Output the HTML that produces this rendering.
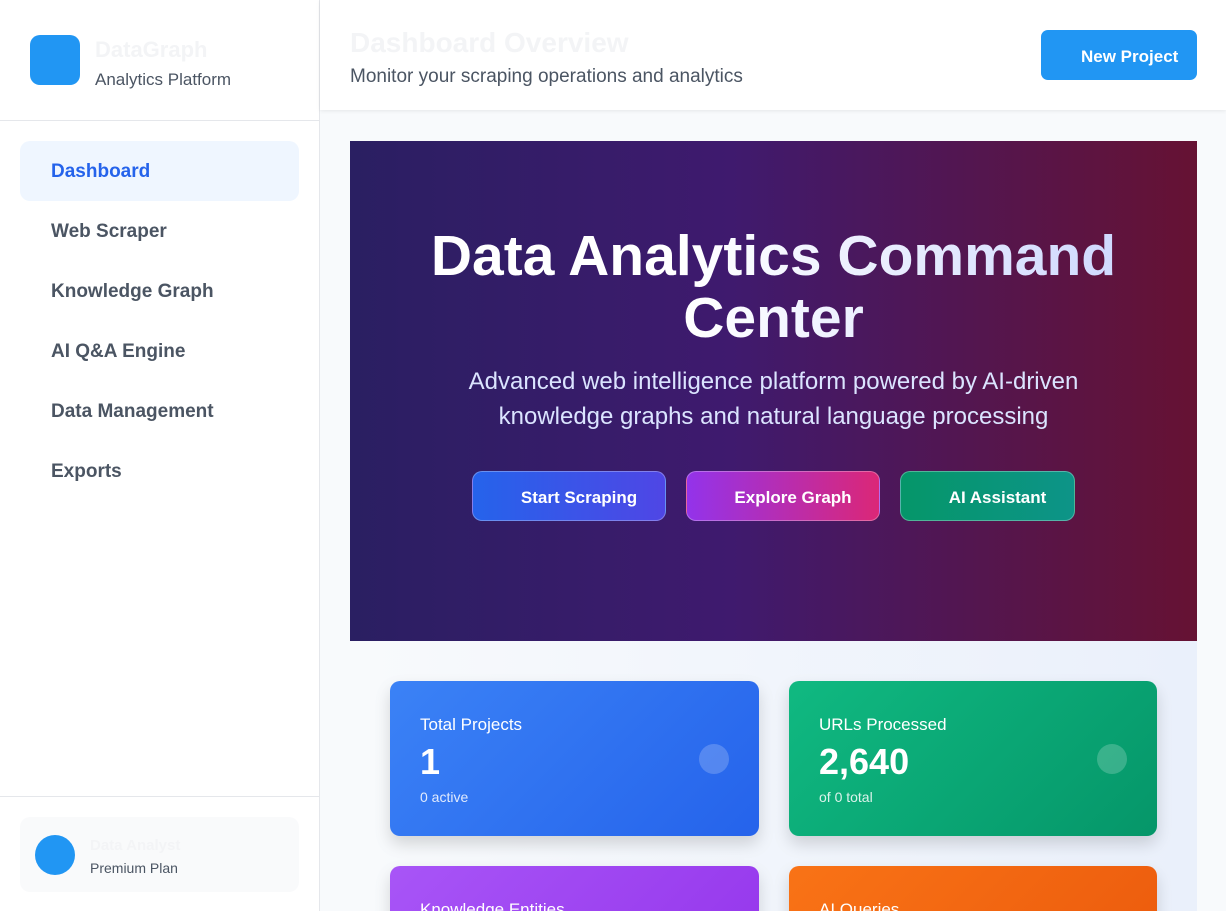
<!DOCTYPE html>
<html style="width:1226px;height:911px;overflow:hidden"><head><style>
*{box-sizing:border-box;margin:0;padding:0}
body{width:1226px;height:911px;overflow:hidden;font-family:"Liberation Sans",sans-serif;background:#f8fafc;position:relative}
.side{position:absolute;left:0;top:0;width:320px;height:911px;background:#fff;border-right:1px solid #e5e7eb}
.logo{position:absolute;left:30px;top:35px;width:50px;height:50px;border-radius:10px;background:#2196f3}
.bt{position:absolute;left:95px;top:37px;font-size:22px;font-weight:bold;color:#f3f4f6}
.bs{position:absolute;left:95px;top:70px;font-size:17px;color:#4b5563}
.hr1{position:absolute;left:0;top:120px;width:320px;border-top:1px solid #e5e7eb}
.nav{position:absolute;left:20px;width:279px;height:60px;border-radius:10px;padding-left:31px;line-height:62px;font-size:19px;font-weight:bold;color:#4b5563}
.nav.a{background:#eff6ff;color:#2563eb}
.hr2{position:absolute;left:0;top:796px;width:320px;border-top:1px solid #e5e7eb}
.user{position:absolute;left:20px;top:817px;width:279px;height:75px;border-radius:10px;background:#f9fafb}
.av{position:absolute;left:15px;top:18px;width:40px;height:40px;border-radius:50%;background:#2196f3}
.header{position:absolute;left:320px;top:0;width:906px;height:110px;background:#fff;box-shadow:0 1px 4px rgba(0,0,0,.08)}
.ht{position:absolute;left:30px;top:27px;font-size:28px;font-weight:bold;color:#f3f4f6}
.hs{position:absolute;left:30px;top:66px;font-size:19px;color:#4b5563}
.btn{position:absolute;left:721px;top:30px;width:156px;height:50px;border-radius:7px;background:#2196f3;color:#fff;font-weight:bold;font-size:17px;line-height:54px;padding-left:40px}
.hero{position:absolute;left:350px;top:141px;width:847px;height:500px;background:linear-gradient(90deg,#2a1f62,#3f1a6e 45%,#661233);text-align:center;color:#fff}
.hero h1{position:absolute;top:84px;left:0;width:100%;font-size:57px;line-height:62px;font-weight:bold;background:linear-gradient(90deg,#fff,#fff 40%,#c7d2fe);-webkit-background-clip:text;color:transparent}
.hero p{position:absolute;top:223px;left:0;width:100%;font-size:24px;line-height:35px;color:#dbe4ff}
.hb{position:absolute;top:330px;height:50px;border-radius:10px;font-size:17px;font-weight:bold;line-height:52px;border:1px solid rgba(255,255,255,.3);text-align:center;padding-left:20px}
.sec{position:absolute;left:350px;top:641px;width:847px;height:270px;overflow:hidden;background:linear-gradient(90deg,#f8fafc,#eaf0fb)}
.card{position:absolute;width:369px;height:155px;border-radius:10px;color:#fff;box-shadow:0 8px 16px rgba(0,0,0,.15)}
.card .l{position:absolute;left:30px;top:34px;font-size:17px}
.card .n{position:absolute;left:30px;top:60px;font-size:36px;font-weight:bold}
.card .s{position:absolute;left:30px;top:108px;font-size:14px;opacity:.85}
.card .c{position:absolute;right:30px;top:63px;width:30px;height:30px;border-radius:50%;background:rgba(255,255,255,.2)}
</style></head><body>
<div class="side">
<div class="logo"></div><div class="bt">DataGraph</div><div class="bs">Analytics Platform</div>
<div class="hr1"></div>
<div class="nav a" style="top:141px">Dashboard</div>
<div class="nav" style="top:201px">Web Scraper</div>
<div class="nav" style="top:261px">Knowledge Graph</div>
<div class="nav" style="top:321px">AI Q&amp;A Engine</div>
<div class="nav" style="top:381px">Data Management</div>
<div class="nav" style="top:441px">Exports</div>
<div class="hr2"></div>
<div class="user"><div class="av"></div><div style="position:absolute;left:70px;top:20px;font-size:15px;font-weight:bold;color:#f3f4f6">Data Analyst</div><div style="position:absolute;left:70px;top:43px;font-size:14px;color:#4b5563">Premium Plan</div></div>
</div>
<div class="header"><div class="ht">Dashboard Overview</div><div class="hs">Monitor your scraping operations and analytics</div><div class="btn">New Project</div></div>
<div class="hero">
<h1>Data Analytics Command<br>Center</h1>
<p>Advanced web intelligence platform powered by AI-driven<br>knowledge graphs and natural language processing</p>
<div class="hb" style="left:122px;width:194px;background:linear-gradient(90deg,#2563eb,#4f46e5)">Start Scraping</div>
<div class="hb" style="left:336px;width:194px;background:linear-gradient(90deg,#9333ea,#db2777)">Explore Graph</div>
<div class="hb" style="left:550px;width:175px;background:linear-gradient(90deg,#059669,#0d9488)">AI Assistant</div>
</div>
<div class="sec">
<div class="card" style="left:40px;top:40px;background:linear-gradient(135deg,#3b82f6,#2563eb)"><div class="l">Total Projects</div><div class="n">1</div><div class="s">0 active</div><div class="c"></div></div>
<div class="card" style="left:439px;top:40px;width:368px;background:linear-gradient(135deg,#10b981,#059669)"><div class="l">URLs Processed</div><div class="n">2,640</div><div class="s">of 0 total</div><div class="c"></div></div>
<div class="card" style="left:40px;top:225px;background:linear-gradient(135deg,#a855f7,#9333ea)"><div class="l">Knowledge Entities</div></div>
<div class="card" style="left:439px;top:225px;width:368px;background:linear-gradient(135deg,#f97316,#ea580c)"><div class="l">AI Queries</div></div>
</div>
</body></html>
